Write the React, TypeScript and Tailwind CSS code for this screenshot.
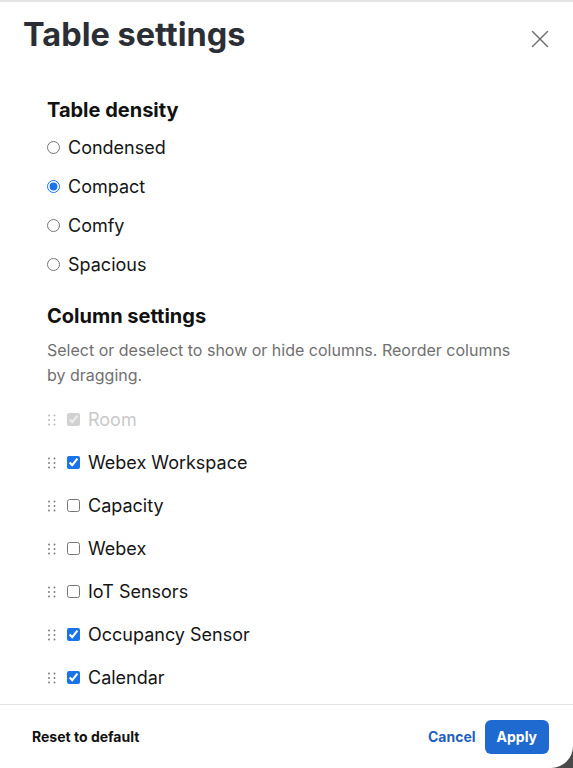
import React, { useState } from 'react';
import { X } from 'lucide-react';

const densities = ['Condensed', 'Compact', 'Comfy', 'Spacious'];

const initialColumns = [
    { name: 'Room', checked: true, locked: true },
    { name: 'Webex Workspace', checked: true },
    { name: 'Capacity', checked: false },
    { name: 'Webex', checked: false },
    { name: 'IoT Sensors', checked: false },
    { name: 'Occupancy Sensor', checked: true },
    { name: 'Calendar', checked: true },
];

const DragHandle: React.FC<{ faded?: boolean }> = ({ faded }) => (
    <svg width="10" height="12" viewBox="0 0 10 12" className={faded ? 'text-[#b8b8b8]' : 'text-[#7a7a7a]'}>
        {[1.5, 6, 10.5].map((y) => (
            <g key={y} fill="currentColor">
                <circle cx="2" cy={y} r="0.95" />
                <circle cx="7.5" cy={y} r="0.95" />
            </g>
        ))}
    </svg>
);

const App: React.FC = () => {
    const [density, setDensity] = useState('Compact');
    const [columns, setColumns] = useState(initialColumns);

    const toggle = (i: number) => {
        setColumns(columns.map((c, idx) => (idx === i && !c.locked ? { ...c, checked: !c.checked } : c)));
    };

    return (
        <div className="w-[573px] h-[768px] bg-[#4a4a4a] overflow-hidden" style={{ fontFamily: 'Inter, "Noto Sans", sans-serif' }}>
            <div className="w-full h-full bg-white rounded-br-[22px] border-t-2 border-[#e4e4e4] flex flex-col">
                {/* Header */}
                <div className="h-[53px] flex items-start justify-between pl-[23px] pr-[18px] pt-[13px]">
                    <h1 className="text-[32.5px] leading-[40px] font-bold text-[#2b2e35]">Table settings</h1>
                    <button className="mt-[9px] text-[#707070]">
                        <X size={30} strokeWidth={1.2} />
                    </button>
                </div>

                {/* Content */}
                <div className="flex-1 px-[47px] pt-[41px]">
                    <h2 className="text-[20px] leading-[28px] font-bold text-[#111]">Table density</h2>
                    <div className="mt-[4px] flex flex-col">
                        {densities.map((d) => (
                            <label key={d} className="h-[39px] flex items-center gap-[8px] cursor-pointer">
                                <input
                                    type="radio"
                                    name="density"
                                    checked={density === d}
                                    onChange={() => setDensity(d)}
                                    className="m-0 w-[13px] h-[13px] accent-[#1a73e8]"
                                />
                                <span className="text-[18px] text-[#151515]">{d}</span>
                            </label>
                        ))}
                    </div>

                    <h2 className="mt-[18px] text-[20px] leading-[28px] font-bold text-[#111]">Column settings</h2>
                    <p className="mt-[8px] text-[16px] leading-[25px] text-[#707070] pr-[4px]">
                        Select or deselect to show or hide columns. Reorder columns by dragging.
                    </p>

                    <div className="mt-[10px] flex flex-col">
                        {columns.map((c, i) => (
                            <div key={c.name} className="h-[43px] flex items-center">
                                <DragHandle faded={c.locked} />
                                <label className="ml-[10px] flex items-center gap-[8px] cursor-pointer">
                                    <input
                                        type="checkbox"
                                        checked={c.checked}
                                        disabled={c.locked}
                                        onChange={() => toggle(i)}
                                        className="m-0 w-[13px] h-[13px] accent-[#1a73e8]"
                                    />
                                    <span className={`text-[18px] ${c.locked ? 'text-[#c9c9c9]' : 'text-[#151515]'}`}>{c.name}</span>
                                </label>
                            </div>
                        ))}
                    </div>
                </div>

                {/* Footer */}
                <div className="border-t border-[#e2e2e2] h-[64px] flex items-center justify-between pl-[32px] pr-[24px]">
                    <button className="text-[14px] font-bold text-[#111]">Reset to default</button>
                    <div className="flex items-center gap-[9px]">
                        <button className="text-[14px] font-bold text-[#1f5fbd]">Cancel</button>
                        <button className="h-[34px] px-[12px] rounded-[6px] bg-[#1f6ad0] text-white text-[14px] font-bold">Apply</button>
                    </div>
                </div>
            </div>
        </div>
    );
};

export default App;
